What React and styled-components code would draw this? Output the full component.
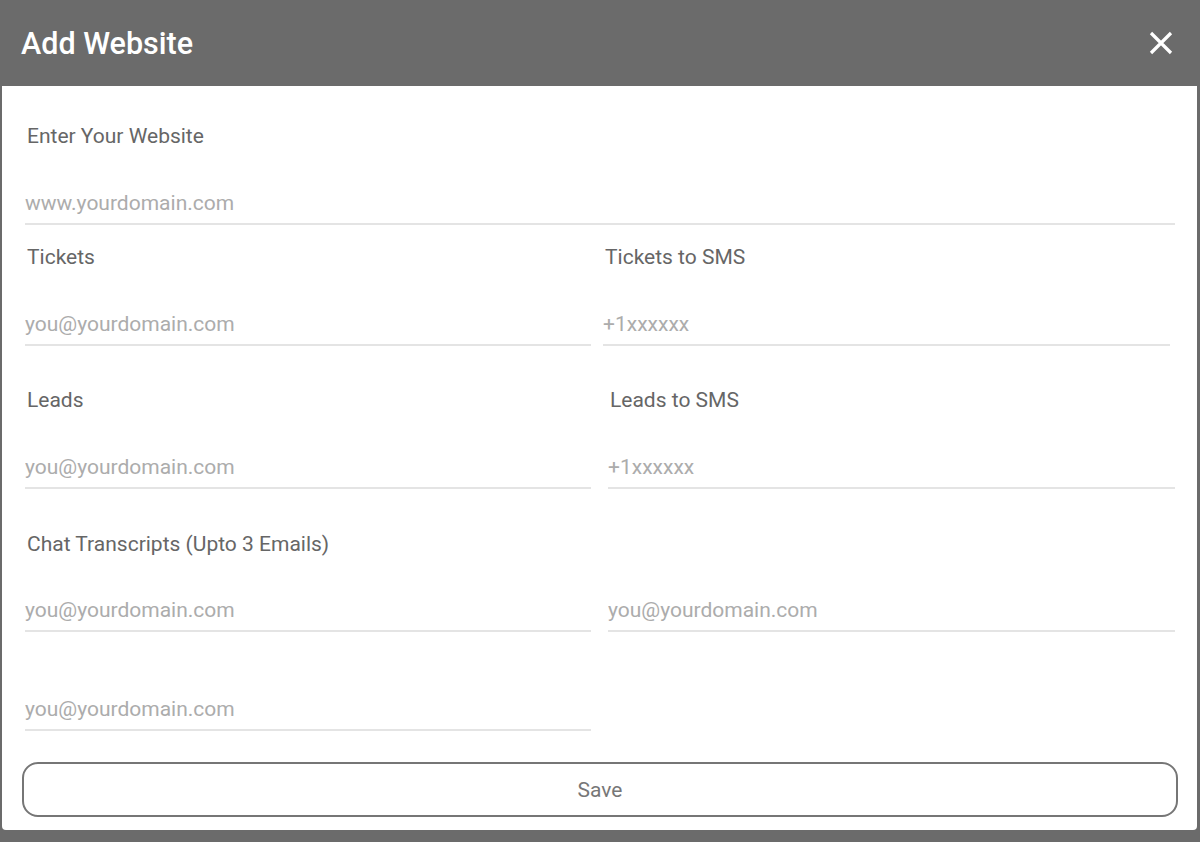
import styled, { createGlobalStyle } from "styled-components"

const GlobalStyle = createGlobalStyle`
    html, body {
        margin: 0;
        padding: 0;
        background: #6b6b6b;
        font-family: Roboto, "Liberation Sans", sans-serif;
    }
    * {
        box-sizing: border-box;
    }
`

export default function App() {

    return (
        <Page>
            <GlobalStyle />
            <Header>
                <Title>Add Website</Title>
                <CloseButton aria-label="Close">
                    <svg width="24" height="24" viewBox="0 0 24 24">
                        <path d="M2 2 L22 22 M22 2 L2 22" stroke="#ffffff" strokeWidth="3.2" strokeLinecap="butt" />
                    </svg>
                </CloseButton>
            </Header>
            <Body>
                <Field>
                    <Label>Enter Your Website</Label>
                    <Input placeholder="www.yourdomain.com" />
                </Field>

                <Row top={20} shift={-5}>
                    <Field>
                        <Label>Tickets</Label>
                        <Input placeholder="you@yourdomain.com" />
                    </Field>
                    <Field>
                        <Label>Tickets to SMS</Label>
                        <Input placeholder="+1xxxxxx" />
                    </Field>
                </Row>

                <Row top={42}>
                    <Field>
                        <Label>Leads</Label>
                        <Input placeholder="you@yourdomain.com" />
                    </Field>
                    <Field>
                        <Label>Leads to SMS</Label>
                        <Input placeholder="+1xxxxxx" />
                    </Field>
                </Row>

                <Section>
                    <Label>Chat Transcripts (Upto 3 Emails)</Label>
                    <Row top={32}>
                        <Input placeholder="you@yourdomain.com" />
                        <Input placeholder="you@yourdomain.com" />
                    </Row>
                    <Row top={55}>
                        <Input placeholder="you@yourdomain.com" />
                    </Row>
                </Section>

                <SaveButton type="submit">Save</SaveButton>
            </Body>
        </Page>
    )
}

const Page = styled.div`
    width: 1200px;
    min-height: 842px;
    background: #6b6b6b;
    display: flex;
    flex-direction: column;
`

const Header = styled.div`
    height: 86px;
    flex-shrink: 0;
    display: flex;
    align-items: center;
    justify-content: space-between;
    padding: 0 27px 0 21px;
    background: #6b6b6b;
`

const Title = styled.h1`
    margin: 0;
    font-size: 30.5px;
    font-weight: 500;
    color: #ffffff;
`

const CloseButton = styled.button`
    display: flex;
    background: none;
    border: none;
    padding: 0;
    cursor: pointer;
`

const Body = styled.form`
    margin: 0 3px 0 2px;
    padding: 38px 22px 13px 23px;
    background: #ffffff;
    border-radius: 0 0 4px 4px;
    display: flex;
    flex-direction: column;
`

const Row = styled.div`
    display: grid;
    grid-template-columns: 566px 567px;
    column-gap: 17px;
    margin-top: ${(p) => p.top || 0}px;
    & > :nth-child(2) {
        margin-left: ${(p) => p.shift || 0}px;
        margin-right: ${(p) => -(p.shift || 0)}px;
    }
`

const Field = styled.div`
    display: flex;
    flex-direction: column;
`

const Section = styled.div`
    display: flex;
    flex-direction: column;
    margin-top: 43px;
`

const Label = styled.label`
    font-size: 21px;
    line-height: 24px;
    color: #666666;
    padding-left: 2px;
    margin-bottom: 33px;
    ${Section} > & {
        margin-bottom: 0;
    }
`

const Input = styled.input`
    width: 100%;
    height: 44px;
    border: none;
    border-bottom: 2px solid #e4e4e4;
    padding: 2px 0 0 0;
    font-family: Roboto, "Liberation Sans", sans-serif;
    font-size: 21px;
    color: #444444;
    outline: none;
    background: transparent;
    &::placeholder {
        color: #acacac;
    }
`

const SaveButton = styled.button`
    margin: 31px -3px 0 -3px;
    height: 55px;
    flex-shrink: 0;
    border: 2px solid #767676;
    border-radius: 16px;
    background: #ffffff;
    font-family: Roboto, "Liberation Sans", sans-serif;
    font-size: 21px;
    color: #777777;
    cursor: pointer;
`
